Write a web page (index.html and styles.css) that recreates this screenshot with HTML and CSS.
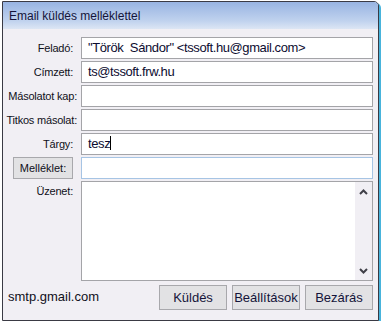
FILE: index.html
```html
<!DOCTYPE html>
<html lang="hu">
  <head>
    <meta charset="utf-8" />
    <title>Email küldés melléklettel</title>
    <link rel="stylesheet" href="styles.css">
  </head>
  <body>
    <div class="window">
      <div class="titlebar">Email küldés melléklettel</div>

      <!-- mail fields -->
      <div class="form">
        <label class="label">Feladó:</label>
        <div class="field">"Török&nbsp; Sándor" &lt;tssoft.hu@gmail.com&gt;</div>

        <label class="label">Címzett:</label>
        <div class="field">ts@tssoft.frw.hu</div>

        <label class="label long">Másolatot kap:</label>
        <div class="field"></div>

        <label class="label long">Titkos másolat:</label>
        <div class="field"></div>

        <label class="label">Tárgy:</label>
        <div class="field">tesz<span class="caret"></span></div>

        <div class="label"><button class="attach-button">Melléklet:</button></div>
        <div class="field focused"></div>

        <label class="label top">Üzenet:</label>
        <div class="message">
          <div class="message-text"></div>
          <div class="scrollbar">
            <svg width="9" height="6" viewBox="0 0 9 6"><polyline points="1,5 4.5,1.5 8,5" fill="none" stroke="#404048" stroke-width="2" /></svg>
            <svg width="9" height="6" viewBox="0 0 9 6"><polyline points="1,1 4.5,4.5 8,1" fill="none" stroke="#404048" stroke-width="2" /></svg>
          </div>
        </div>
      </div>

      <div class="footer">
        <span class="server">smtp.gmail.com</span>
        <div class="buttons">
          <button class="btn">Küldés</button>
          <button class="btn">Beállítások</button>
          <button class="btn">Bezárás</button>
        </div>
      </div>
    </div>
  </body>
</html>
```

FILE: styles.css
```css
* {
  box-sizing: border-box;
}

body {
  margin: 0;
  background-color: white;
  font-family: 'Liberation Sans', Arial, sans-serif;
  color: #101020;
}

.window {
  margin: 1px 0 0 2px;
  width: 377px;
  height: 320px;
  border: 1px solid #3a3a44;
  border-top-right-radius: 5px;
  background-color: #f1eff4;
  box-shadow: 2px 2px 0 #48b4dc;
  display: flex;
  flex-direction: column;
}

.titlebar {
  height: 27px;
  padding: 7px 0 0 6px;
  font-size: 12px;
  color: #14143a;
  background: linear-gradient(#98b4e2, #c0d2ee 70%, #dce6f4);
  border-top-right-radius: 4px;
}

.form {
  display: grid;
  grid-template-columns: 74px 292px;
  column-gap: 4px;
  row-gap: 2px;
  padding-top: 8px;
}

.label {
  font-size: 11px;
  text-align: right;
  padding-right: 4px;
  align-self: center;
  letter-spacing: -0.2px;
}

.label.long {
  padding-right: 0;
}

.label.top {
  align-self: start;
  padding-top: 4px;
}

.field {
  height: 22px;
  background-color: white;
  border: 1px solid #a4a4a8;
  font-size: 13px;
  letter-spacing: -0.4px;
  line-height: 20px;
  padding-left: 6px;
  color: #0c0c30;
  white-space: nowrap;
}

.field.focused {
  border-color: #a6c4e4;
}

.caret {
  display: inline-block;
  width: 1px;
  height: 14px;
  background-color: black;
  vertical-align: -2px;
}

.attach-button {
  width: 60px;
  height: 22px;
  font-family: inherit;
  font-size: 11px;
  color: #101020;
  background-color: #e2e2e4;
  border: 1px solid #a8a8ac;
  padding: 0;
}

.message {
  height: 100px;
  background-color: white;
  border: 1px solid #a4a4a8;
  display: flex;
}

.message-text {
  flex: 1;
}

.scrollbar {
  width: 17px;
  background-color: #f1eff4;
  display: flex;
  flex-direction: column;
  justify-content: space-between;
  align-items: center;
  padding: 7px 0 6px;
}

.footer {
  display: flex;
  justify-content: space-between;
  align-items: center;
  padding: 4px 5px 0 5px;
}

.server {
  font-size: 13px;
  padding-bottom: 2px;
}

.buttons {
  display: flex;
  gap: 5px;
}

.btn {
  width: 68px;
  height: 25px;
  font-family: inherit;
  font-size: 13px;
  color: #14143a;
  background-color: #e2e2e4;
  border: 1px solid #a8a8ac;
  padding: 0;
}
```
